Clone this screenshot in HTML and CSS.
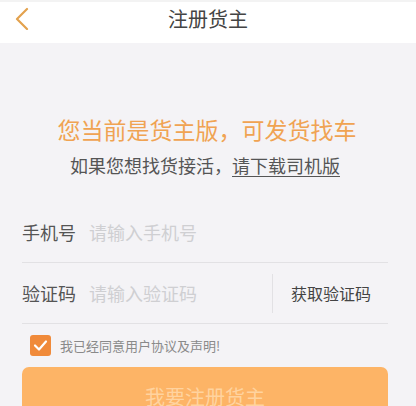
FILE: index.html
```html
<!DOCTYPE html>
<html lang="zh-CN">
<head>
<meta charset="utf-8">
<link rel="stylesheet" href="styles.css">
</head>
<body>
<div class="page">
  <header class="nav">
    <svg class="back" width="16" height="24" viewBox="0 0 16 24"><polyline points="12,3 2,13 12,23" fill="none" stroke="#e3a24e" stroke-width="2.2" stroke-linecap="round" stroke-linejoin="round"/></svg>
    <div class="title">注册货主</div>
  </header>
  <main class="content">
    <div class="headline">您当前是货主版，可发货找车</div>
    <div class="sub">如果您想找货接活，<span class="link">请下载司机版</span></div>
    <div class="row row-first">
      <span class="label">手机号</span>
      <span class="ph">请输入手机号</span>
    </div>
    <div class="row">
      <span class="label">验证码</span>
      <span class="ph grow">请输入验证码</span>
      <span class="sep"></span>
      <span class="code">获取验证码</span>
    </div>
    <div class="agree">
      <span class="check"><svg width="21" height="21" viewBox="0 0 21 21"><polyline points="5,10.5 9,14.5 16,6.5" fill="none" stroke="#fff" stroke-width="2.2" stroke-linecap="round" stroke-linejoin="round"/></svg></span>
      <span class="agree-text">我已经同意用户协议及声明!</span>
    </div>
    <button class="submit">我要注册货主</button>
  </main>
</div>
</body>
</html>
```
FILE: styles.css
```css
html, body {
  margin: 0;
  padding: 0;
  background: #f4f3f6;
  font-family: "Noto Sans CJK SC", "Noto Sans", sans-serif;
}
.page {
  width: 416px;
  height: 406px;
  overflow: hidden;
}
.nav {
  height: 43px;
  background: #fff;
  border-top: 2px solid #f3f3f3;
  box-sizing: border-box;
  display: flex;
  align-items: center;
  justify-content: center;
  position: relative;
}
.back {
  position: absolute;
  left: 15px;
  top: 4px;
}
.title {
  font-size: 20px;
  line-height: 28px;
  color: #444;
  margin-top: -8px;
}
.content {
  padding: 0 28px 0 22px;
}
.headline {
  margin-top: 71px;
  font-size: 23px;
  line-height: 30px;
  color: #f0a352;
  text-align: center;
  padding-left: 4px;
}
.sub {
  margin-top: 9px;
  font-size: 18px;
  line-height: 24px;
  color: #555;
  text-align: center;
}
.link {
  text-decoration: underline;
  text-underline-offset: 3px;
  text-decoration-thickness: 1px;
}
.row {
  height: 60px;
  border-bottom: 1px solid #e2e1e4;
  display: flex;
  align-items: center;
  font-size: 18px;
  line-height: 24px;
}
.row-first {
  margin-top: 25px;
}
.label {
  color: #555;
  width: 54px;
  margin-right: 13px;
  white-space: nowrap;
}
.ph {
  color: #cfcfd2;
}
.grow {
  flex: 1;
}
.sep {
  width: 1px;
  height: 39px;
  background: #e2e1e4;
  margin-right: 18px;
}
.code {
  font-size: 16px;
  color: #444;
  margin-right: 17px;
}
.agree {
  margin-top: 11px;
  padding-left: 8px;
  display: flex;
  align-items: center;
}
.check {
  width: 21px;
  height: 21px;
  border-radius: 3px;
  background: #f08a3a;
  display: flex;
}
.agree-text {
  margin-left: 9px;
  font-size: 13px;
  line-height: 20px;
  color: #8a8a8a;
}
.submit {
  display: block;
  width: 100%;
  height: 60px;
  margin-top: 11px;
  border: none;
  border-radius: 7px;
  background: #fdb466;
  color: #ffd39f;
  font-family: inherit;
  font-size: 20px;
  line-height: 28px;
  padding: 0;
}
```
